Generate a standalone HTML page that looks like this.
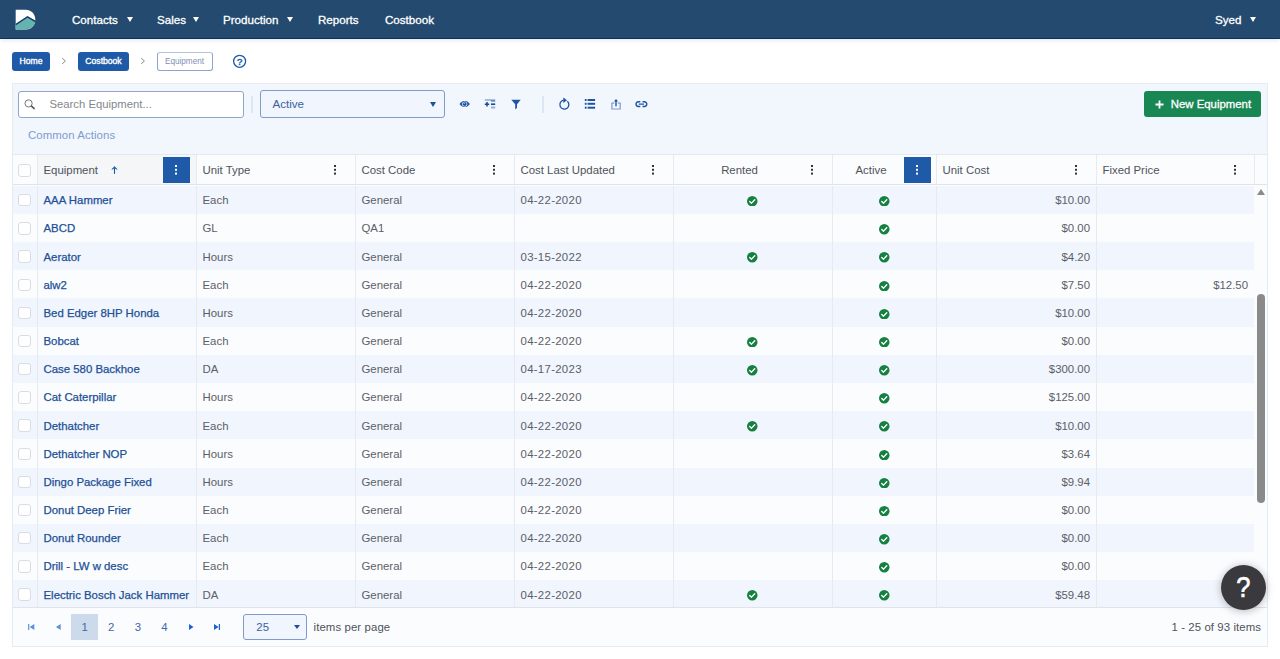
<!DOCTYPE html>
<html lang="en">
<head>
<meta charset="utf-8">
<title>Equipment</title>
<style>
*{box-sizing:border-box;margin:0;padding:0}
html,body{width:1280px;height:659px;overflow:hidden;background:#fff;font-family:"Liberation Sans",sans-serif;color:#4a4f57;font-size:11.4px}
.nav{position:absolute;left:0;top:0;width:1280px;height:39px;background:#244a6f;border-bottom:1.3px solid #0a3263;box-shadow:0 3px 3px -1px rgba(0,0,0,.08)}
.nav .item{position:absolute;top:0;height:39px;line-height:39px;color:#fff;font-size:11.6px;font-weight:400;-webkit-text-stroke:.3px #fff;white-space:nowrap}
.nav .caret{position:absolute;top:17px;width:0;height:0;border-left:3.6px solid transparent;border-right:3.6px solid transparent;border-top:5.6px solid #fff}
.logo{position:absolute;left:15px;top:9px;width:21px;height:21px}
.bc{position:absolute;top:52px;height:18.5px;border-radius:3px;font-size:8.6px;line-height:18.5px;text-align:center;white-space:nowrap}
.bc.fill{background:#1e5aa8;color:#fff;-webkit-text-stroke:.35px #fff}
.bc.out{border:1px solid #8da4cc;border-top-color:#b5c3de;color:#8797bd;line-height:17.6px;background:#fff;font-size:8.2px;color:#7f8fb5}
.chev{position:absolute;top:52px;font-size:11px;line-height:18px;color:#8a8a8a}
.panel{position:absolute;left:12px;top:83px;width:1256px;height:564px;background:#f2f6fd;border:1px solid #e6eaf2}
.search{position:absolute;left:18px;top:91px;width:226px;height:27px;background:#fff;border:1px solid #8fa6cf;border-radius:3px}
.search span{position:absolute;left:30.5px;top:0;line-height:25px;font-size:11.3px;color:#84878e;white-space:nowrap}
.vdiv{position:absolute;top:96px;width:1.5px;height:16.5px;background:#dde6f3}
.select{position:absolute;left:260px;top:90px;width:185px;height:28px;border:1px solid #7f9acb;border-radius:3px;background:#f1f5fd}
.select span{position:absolute;left:11.5px;top:0;line-height:26px;font-size:11.6px;color:#3a5f9e}
.select i{position:absolute;right:8px;top:11px;width:0;height:0;border-left:3px solid transparent;border-right:3px solid transparent;border-top:5px solid #1e4f9a}
.ico{position:absolute}
.btn{position:absolute;left:1143.7px;top:91px;width:117.3px;height:26.3px;background:#198754;border-radius:3px;color:#fff;font-size:11.4px;line-height:26px;white-space:nowrap;-webkit-text-stroke:.3px #fff}
.btn span{position:absolute;left:27px;top:0}
.ca{position:absolute;left:28px;top:128px;font-size:11.4px;line-height:14px;color:#7c9dcf;letter-spacing:.08px;white-space:nowrap}
.grid{position:absolute;left:13px;top:154px;width:1254px;height:492px;background:#fbfcfe}
.thead{position:absolute;left:0;top:0;width:1254px;height:31px;background:#fbfcfe;border-top:1px solid #e4e8ef;border-bottom:1px solid #e0e4ea}
.th{position:absolute;top:0;height:29px;line-height:30px;border-left:1px solid #e7eaf0;font-size:11.4px;color:#4e535b;white-space:nowrap}
.th span{position:absolute;left:5.5px}
.th.ctr span{left:0;right:55px;text-align:center}
.dots{position:absolute;top:10px;width:3px;height:12px}
.dots:before{content:"";position:absolute;left:.1px;top:.2px;width:2.3px;height:2.1px;background:#333;box-shadow:0 3.8px 0 #333,0 7.6px 0 #333}
.dots.w:before{background:#fff;box-shadow:0 3.8px 0 #fff,0 7.6px 0 #fff}
.mbtn{position:absolute;top:2px;width:27px;height:26px;background:#1e5aa8}
.body{position:absolute;left:0;top:31.8px;width:1241px;height:421.2px;overflow:hidden}
.tr{position:relative;height:28.18px;width:1241px}
.tr.odd{background:#f1f5fd}
.tr.even{background:#fbfcfe}
.td{position:absolute;top:0;height:28.18px;line-height:28.18px;padding-top:.4px;border-left:1px solid #e7eaf1;padding-left:5.5px;white-space:nowrap;font-size:11.4px;color:#5b6068}
.td a{color:#1d5096;-webkit-text-stroke:.25px #1d5096}
.td.num{text-align:right;padding-right:6px}
.td.ctr{padding:0}
.c0{left:0;width:24px;border-left:none}
.c1{left:24px;width:159px}.c2{left:183px;width:159px}.c3{left:342px;width:159px}.c4{left:501px;width:159px;letter-spacing:.3px}
.c5{left:660px;width:159px}.c6{left:819px;width:104px}.c7{left:923px;width:160px}.c8{left:1083px;width:158px}
.cb{position:absolute;left:5.4px;top:8.2px;width:12.6px;height:12.4px;border:1px solid #d9dce1;border-radius:3px;background:#fff}
.ck{position:absolute;top:10.2px;width:10.5px;height:10.5px}
.c5 .ck{left:73.4px}.c6 .ck{left:46.4px}
.pager{position:absolute;left:0;top:453px;width:1254px;height:39px;border-top:1px solid #e0e4ea;background:#fbfcfe}
.pg{position:absolute;top:5.7px;width:26.6px;height:26.3px;line-height:27px;text-align:center;font-size:11.4px;color:#3f68a8}
.pg.sel{background:#cddaeb;color:#3f68a8}
.psel{position:absolute;left:230.2px;top:6.2px;width:63.4px;height:25.6px;border:1px solid #7f9acb;border-radius:3px;background:#f1f5fd}
.psel span{position:absolute;left:12px;line-height:25px;letter-spacing:.2px;font-size:11.4px;color:#3a5f9e}
.psel i{position:absolute;right:5.5px;top:9.6px;width:0;height:0;border-left:3.3px solid transparent;border-right:3.3px solid transparent;border-top:4.6px solid #1e4f9a}
.ipp{position:absolute;left:300.5px;top:6px;line-height:26px;letter-spacing:.1px;font-size:11.4px;color:#4e535b;white-space:nowrap}
.info{position:absolute;right:6px;top:6px;line-height:26px;letter-spacing:.08px;font-size:11.4px;color:#4e535b;white-space:nowrap}
.sb{position:absolute;left:1241px;top:31px;width:13px;height:422px;background:#fbfcfe}
.sb .thumb{position:absolute;left:3.3px;top:108.6px;width:7.6px;height:209.6px;border-radius:4px;background:#8a8a8a}
.sb .up{position:absolute;left:3.2px;top:4px;width:0;height:0;border-left:4px solid transparent;border-right:4px solid transparent;border-bottom:6px solid #8a8a8a}
.fab span{display:inline-block;transform:scaleX(.85);position:relative;top:-.7px;left:-.3px}
.fab{position:absolute;left:1221px;top:565px;width:45px;height:45px;border-radius:50%;background:#3a393e;box-shadow:0 1px 8px rgba(0,0,0,.28);color:#fff;font-size:30px;font-weight:400;-webkit-text-stroke:.7px #fff;text-align:center;line-height:45px}
</style>
</head>
<body>
<div class="nav">
<svg class="logo" viewBox="0 0 21 21"><path d="M0.7 0.7 H10.6 C16.2 0.7 20.3 5 20.3 10.6 C20.3 16.2 16.6 20.5 11 20.5 H0.7 Z" fill="#fff"/><path d="M0.7 16.3 L12.5 8.6 L20.1 13.1 C19.3 17.5 15.8 20.5 11 20.5 H0.7 Z" fill="#65b3b0"/><path d="M0.7 15.6 L12.5 7.9 L20.3 12.5" fill="none" stroke="#123a66" stroke-width="1.5"/></svg>
<div class="item" style="left:72px">Contacts</div><i class="caret" style="left:126.5px"></i>
<div class="item" style="left:157px">Sales</div><i class="caret" style="left:193.1px"></i>
<div class="item" style="left:223px">Production</div><i class="caret" style="left:287.4px"></i>
<div class="item" style="left:318px">Reports</div>
<div class="item" style="left:385px">Costbook</div>
<div class="item" style="left:1215px">Syed</div><i class="caret" style="left:1250px"></i>
</div>
<div class="bc fill" style="left:12px;width:38px">Home</div>
<svg class="ico" style="left:61px;top:57px" width="6" height="8" viewBox="0 0 6 8"><path d="M1.2 1.1 L4.4 4 L1.2 6.9" fill="none" stroke="#8a8a8a" stroke-width="1"/></svg>
<div class="bc fill" style="left:78px;width:51px">Costbook</div>
<svg class="ico" style="left:140px;top:57px" width="6" height="8" viewBox="0 0 6 8"><path d="M1.2 1.1 L4.4 4 L1.2 6.9" fill="none" stroke="#8a8a8a" stroke-width="1"/></svg>
<div class="bc out" style="left:156.5px;width:56px">Equipment</div>
<svg class="ico" style="left:232px;top:54px" width="15" height="15" viewBox="0 0 15 15"><circle cx="7.6" cy="7.3" r="6" fill="#fff" stroke="#1e5aa8" stroke-width="1.3"/><text x="7.6" y="11.3" text-anchor="middle" font-family="Liberation Sans, sans-serif" font-weight="400" stroke="#1e5aa8" stroke-width=".4" font-size="9.7" fill="#1e5aa8">?</text></svg>

<div class="panel"></div>
<div class="search"><svg style="position:absolute;left:5px;top:7px" width="12" height="12" viewBox="0 0 12 12"><circle cx="4.6" cy="4.4" r="3.6" fill="none" stroke="#707070" stroke-width=".95"/><path d="M7.5 7.1 L10.2 9.6" stroke="#555" stroke-width="1.5" stroke-linecap="round"/></svg><span>Search Equipment...</span></div>
<div class="vdiv" style="left:251px"></div>
<div class="select"><span>Active</span><i></i></div>

<svg class="ico" style="left:459px;top:100px" width="12" height="8" viewBox="0 0 12 8"><path d="M0.5 4 C2.3 1.4 4 0.9 5.7 0.9 C7.4 0.9 9.1 1.4 10.9 4 C9.1 6.6 7.4 7.1 5.7 7.1 C4 7.1 2.3 6.6 0.5 4 Z" fill="#1d55a3"/><circle cx="5.7" cy="4" r="2.6" fill="#f2f6fd"/><circle cx="5.7" cy="4" r="2" fill="#1d55a3"/><rect x="4.6" y="2.7" width="1.3" height="1" fill="#c9d6ee"/></svg>
<svg class="ico" style="left:484px;top:99px" width="12" height="11" viewBox="0 0 12 11"><rect x="0.8" y="0.5" width="10.4" height="1" fill="#5d84c4"/><rect x="7" y="1.5" width="4.2" height="1" fill="#2d62ad"/><rect x="7" y="4.4" width="4.2" height="1.6" fill="#174a96"/><rect x="7" y="7.4" width="4.2" height="2.2" fill="#9db5dd"/><path d="M3 3.1V7.5M0.8 5.3H5.2" stroke="#174a96" stroke-width="1.5"/></svg>
<svg class="ico" style="left:511px;top:99px" width="11" height="11" viewBox="0 0 11 11"><path d="M0.3 0.8 H9.7 L6 5.2 V9 L4.2 10.2 V5.2 Z" fill="#1d55a3"/></svg>
<svg class="ico" style="left:558px;top:97px" width="13" height="14" viewBox="0 0 13 14"><path d="M9.3 4.2 A4.5 4.5 0 1 1 5.5 3.2" fill="none" stroke="#1d55a3" stroke-width="1.35"/><path d="M5.3 0.6 L9 3.3 L5.3 6 Z" fill="#1d55a3"/></svg>
<svg class="ico" style="left:584px;top:98px" width="12" height="12" viewBox="0 0 12 12"><g fill="#1d55a3"><rect x="0.8" y="1" width="1.8" height="2"/><rect x="3.6" y="1" width="7.5" height="2"/><rect x="0.8" y="4.8" width="1.8" height="2"/><rect x="3.6" y="4.8" width="7.5" height="2"/><rect x="0.8" y="8.7" width="1.8" height="2"/><rect x="3.6" y="8.7" width="7.5" height="2"/></g></svg>
<svg class="ico" style="left:610px;top:98px" width="12" height="13" viewBox="0 0 12 13"><path d="M4.2 5.1 H1.9 V11 H10.2 V5.1 H7.9" fill="none" stroke="#7d9ad2" stroke-width="1.2"/><path d="M6 8.2 V2.4" stroke="#1d55a3" stroke-width="1.4"/><path d="M3.9 3.6 L6 1 L8.1 3.6 Z" fill="#1d55a3"/></svg>
<svg class="ico" style="left:635px;top:100px" width="13" height="8" viewBox="0 0 13 8"><path d="M5.3 1.7 H3.4 A2.4 2.4 0 0 0 3.4 6.5 H5.3 M7.5 1.7 H9.4 A2.4 2.4 0 0 1 9.4 6.5 H7.5 M3.8 4.1 H9" fill="none" stroke="#1d55a3" stroke-width="1.4"/></svg>

<div class="vdiv" style="left:542.2px"></div>
<div class="btn"><svg style="position:absolute;left:11px;top:8.5px" width="9" height="9" viewBox="0 0 9 9"><path d="M4.5 0.5V8.5M0.5 4.5H8.5" stroke="#fff" stroke-width="1.8"/></svg><span>New Equipment</span></div>
<div class="ca">Common Actions</div>

<div class="grid">
<div class="thead">
<div class="th" style="left:0;width:24px;border-left:none"><span class="cb" style="left:5.4px;top:9.1px;height:12.7px"></span></div>
<div class="th" style="left:24px;width:159px;background:#f5f6f8"><span>Equipment</span><svg style="position:absolute;left:73px;top:9px" width="7" height="10" viewBox="0 0 7 10"><path d="M3.5 9.9V3.2" fill="none" stroke="#1e5aa8" stroke-width="1.1"/><path d="M0.9 5.2 L3.5 2.4 L6.1 5.2 L6.1 5.4 L3.5 4 L0.9 5.4Z" fill="#1e5aa8" stroke="#1e5aa8" stroke-width=".5"/></svg><div class="mbtn" style="left:125px"><i class="dots w" style="left:11.8px;top:7.8px"></i></div></div>
<div class="th" style="left:183px;width:159px"><span>Unit Type</span><i class="dots" style="left:137px"></i></div>
<div class="th" style="left:342px;width:159px"><span>Cost Code</span><i class="dots" style="left:137px"></i></div>
<div class="th" style="left:501px;width:159px"><span>Cost Last Updated</span><i class="dots" style="left:137px"></i></div>
<div class="th ctr" style="left:660px;width:159px"><span style="right:27px">Rented</span><i class="dots" style="left:137px"></i></div>
<div class="th ctr" style="left:819px;width:104px"><span style="right:27px">Active</span><div class="mbtn" style="left:71px"><i class="dots w" style="left:11.8px;top:7.8px"></i></div></div>
<div class="th" style="left:923px;width:160px"><span>Unit Cost</span><i class="dots" style="left:138px"></i></div>
<div class="th" style="left:1083px;width:159px"><span>Fixed Price</span><i class="dots" style="left:137px"></i></div>
<div class="th" style="left:1241px;width:13px"></div>
</div>
<div class="body">
<div class="tr odd"><div class="td c0"><span class="cb"></span></div><div class="td c1"><a>AAA Hammer</a></div><div class="td c2">Each</div><div class="td c3">General</div><div class="td c4">04-22-2020</div><div class="td c5 ctr"><svg class="ck" viewBox="0 0 16 16"><circle cx="8" cy="8" r="8" fill="#15803f"/><path d="M4.2 8.3 L6.9 10.9 L11.8 5.6" fill="none" stroke="#fff" stroke-width="2.1" stroke-linecap="round" stroke-linejoin="round"/></svg></div><div class="td c6 ctr"><svg class="ck" viewBox="0 0 16 16"><circle cx="8" cy="8" r="8" fill="#15803f"/><path d="M4.2 8.3 L6.9 10.9 L11.8 5.6" fill="none" stroke="#fff" stroke-width="2.1" stroke-linecap="round" stroke-linejoin="round"/></svg></div><div class="td c7 num">$10.00</div><div class="td c8 num"></div></div>
<div class="tr even"><div class="td c0"><span class="cb"></span></div><div class="td c1"><a>ABCD</a></div><div class="td c2">GL</div><div class="td c3">QA1</div><div class="td c4"></div><div class="td c5 ctr"></div><div class="td c6 ctr"><svg class="ck" viewBox="0 0 16 16"><circle cx="8" cy="8" r="8" fill="#15803f"/><path d="M4.2 8.3 L6.9 10.9 L11.8 5.6" fill="none" stroke="#fff" stroke-width="2.1" stroke-linecap="round" stroke-linejoin="round"/></svg></div><div class="td c7 num">$0.00</div><div class="td c8 num"></div></div>
<div class="tr odd"><div class="td c0"><span class="cb"></span></div><div class="td c1"><a>Aerator</a></div><div class="td c2">Hours</div><div class="td c3">General</div><div class="td c4">03-15-2022</div><div class="td c5 ctr"><svg class="ck" viewBox="0 0 16 16"><circle cx="8" cy="8" r="8" fill="#15803f"/><path d="M4.2 8.3 L6.9 10.9 L11.8 5.6" fill="none" stroke="#fff" stroke-width="2.1" stroke-linecap="round" stroke-linejoin="round"/></svg></div><div class="td c6 ctr"><svg class="ck" viewBox="0 0 16 16"><circle cx="8" cy="8" r="8" fill="#15803f"/><path d="M4.2 8.3 L6.9 10.9 L11.8 5.6" fill="none" stroke="#fff" stroke-width="2.1" stroke-linecap="round" stroke-linejoin="round"/></svg></div><div class="td c7 num">$4.20</div><div class="td c8 num"></div></div>
<div class="tr even"><div class="td c0"><span class="cb"></span></div><div class="td c1"><a>alw2</a></div><div class="td c2">Each</div><div class="td c3">General</div><div class="td c4">04-22-2020</div><div class="td c5 ctr"></div><div class="td c6 ctr"><svg class="ck" viewBox="0 0 16 16"><circle cx="8" cy="8" r="8" fill="#15803f"/><path d="M4.2 8.3 L6.9 10.9 L11.8 5.6" fill="none" stroke="#fff" stroke-width="2.1" stroke-linecap="round" stroke-linejoin="round"/></svg></div><div class="td c7 num">$7.50</div><div class="td c8 num">$12.50</div></div>
<div class="tr odd"><div class="td c0"><span class="cb"></span></div><div class="td c1"><a>Bed Edger 8HP Honda</a></div><div class="td c2">Hours</div><div class="td c3">General</div><div class="td c4">04-22-2020</div><div class="td c5 ctr"></div><div class="td c6 ctr"><svg class="ck" viewBox="0 0 16 16"><circle cx="8" cy="8" r="8" fill="#15803f"/><path d="M4.2 8.3 L6.9 10.9 L11.8 5.6" fill="none" stroke="#fff" stroke-width="2.1" stroke-linecap="round" stroke-linejoin="round"/></svg></div><div class="td c7 num">$10.00</div><div class="td c8 num"></div></div>
<div class="tr even"><div class="td c0"><span class="cb"></span></div><div class="td c1"><a>Bobcat</a></div><div class="td c2">Each</div><div class="td c3">General</div><div class="td c4">04-22-2020</div><div class="td c5 ctr"><svg class="ck" viewBox="0 0 16 16"><circle cx="8" cy="8" r="8" fill="#15803f"/><path d="M4.2 8.3 L6.9 10.9 L11.8 5.6" fill="none" stroke="#fff" stroke-width="2.1" stroke-linecap="round" stroke-linejoin="round"/></svg></div><div class="td c6 ctr"><svg class="ck" viewBox="0 0 16 16"><circle cx="8" cy="8" r="8" fill="#15803f"/><path d="M4.2 8.3 L6.9 10.9 L11.8 5.6" fill="none" stroke="#fff" stroke-width="2.1" stroke-linecap="round" stroke-linejoin="round"/></svg></div><div class="td c7 num">$0.00</div><div class="td c8 num"></div></div>
<div class="tr odd"><div class="td c0"><span class="cb"></span></div><div class="td c1"><a>Case 580 Backhoe</a></div><div class="td c2">DA</div><div class="td c3">General</div><div class="td c4">04-17-2023</div><div class="td c5 ctr"><svg class="ck" viewBox="0 0 16 16"><circle cx="8" cy="8" r="8" fill="#15803f"/><path d="M4.2 8.3 L6.9 10.9 L11.8 5.6" fill="none" stroke="#fff" stroke-width="2.1" stroke-linecap="round" stroke-linejoin="round"/></svg></div><div class="td c6 ctr"><svg class="ck" viewBox="0 0 16 16"><circle cx="8" cy="8" r="8" fill="#15803f"/><path d="M4.2 8.3 L6.9 10.9 L11.8 5.6" fill="none" stroke="#fff" stroke-width="2.1" stroke-linecap="round" stroke-linejoin="round"/></svg></div><div class="td c7 num">$300.00</div><div class="td c8 num"></div></div>
<div class="tr even"><div class="td c0"><span class="cb"></span></div><div class="td c1"><a>Cat Caterpillar</a></div><div class="td c2">Hours</div><div class="td c3">General</div><div class="td c4">04-22-2020</div><div class="td c5 ctr"></div><div class="td c6 ctr"><svg class="ck" viewBox="0 0 16 16"><circle cx="8" cy="8" r="8" fill="#15803f"/><path d="M4.2 8.3 L6.9 10.9 L11.8 5.6" fill="none" stroke="#fff" stroke-width="2.1" stroke-linecap="round" stroke-linejoin="round"/></svg></div><div class="td c7 num">$125.00</div><div class="td c8 num"></div></div>
<div class="tr odd"><div class="td c0"><span class="cb"></span></div><div class="td c1"><a>Dethatcher</a></div><div class="td c2">Each</div><div class="td c3">General</div><div class="td c4">04-22-2020</div><div class="td c5 ctr"><svg class="ck" viewBox="0 0 16 16"><circle cx="8" cy="8" r="8" fill="#15803f"/><path d="M4.2 8.3 L6.9 10.9 L11.8 5.6" fill="none" stroke="#fff" stroke-width="2.1" stroke-linecap="round" stroke-linejoin="round"/></svg></div><div class="td c6 ctr"><svg class="ck" viewBox="0 0 16 16"><circle cx="8" cy="8" r="8" fill="#15803f"/><path d="M4.2 8.3 L6.9 10.9 L11.8 5.6" fill="none" stroke="#fff" stroke-width="2.1" stroke-linecap="round" stroke-linejoin="round"/></svg></div><div class="td c7 num">$10.00</div><div class="td c8 num"></div></div>
<div class="tr even"><div class="td c0"><span class="cb"></span></div><div class="td c1"><a>Dethatcher NOP</a></div><div class="td c2">Hours</div><div class="td c3">General</div><div class="td c4">04-22-2020</div><div class="td c5 ctr"></div><div class="td c6 ctr"><svg class="ck" viewBox="0 0 16 16"><circle cx="8" cy="8" r="8" fill="#15803f"/><path d="M4.2 8.3 L6.9 10.9 L11.8 5.6" fill="none" stroke="#fff" stroke-width="2.1" stroke-linecap="round" stroke-linejoin="round"/></svg></div><div class="td c7 num">$3.64</div><div class="td c8 num"></div></div>
<div class="tr odd"><div class="td c0"><span class="cb"></span></div><div class="td c1"><a>Dingo Package Fixed</a></div><div class="td c2">Hours</div><div class="td c3">General</div><div class="td c4">04-22-2020</div><div class="td c5 ctr"></div><div class="td c6 ctr"><svg class="ck" viewBox="0 0 16 16"><circle cx="8" cy="8" r="8" fill="#15803f"/><path d="M4.2 8.3 L6.9 10.9 L11.8 5.6" fill="none" stroke="#fff" stroke-width="2.1" stroke-linecap="round" stroke-linejoin="round"/></svg></div><div class="td c7 num">$9.94</div><div class="td c8 num"></div></div>
<div class="tr even"><div class="td c0"><span class="cb"></span></div><div class="td c1"><a>Donut Deep Frier</a></div><div class="td c2">Each</div><div class="td c3">General</div><div class="td c4">04-22-2020</div><div class="td c5 ctr"></div><div class="td c6 ctr"><svg class="ck" viewBox="0 0 16 16"><circle cx="8" cy="8" r="8" fill="#15803f"/><path d="M4.2 8.3 L6.9 10.9 L11.8 5.6" fill="none" stroke="#fff" stroke-width="2.1" stroke-linecap="round" stroke-linejoin="round"/></svg></div><div class="td c7 num">$0.00</div><div class="td c8 num"></div></div>
<div class="tr odd"><div class="td c0"><span class="cb"></span></div><div class="td c1"><a>Donut Rounder</a></div><div class="td c2">Each</div><div class="td c3">General</div><div class="td c4">04-22-2020</div><div class="td c5 ctr"></div><div class="td c6 ctr"><svg class="ck" viewBox="0 0 16 16"><circle cx="8" cy="8" r="8" fill="#15803f"/><path d="M4.2 8.3 L6.9 10.9 L11.8 5.6" fill="none" stroke="#fff" stroke-width="2.1" stroke-linecap="round" stroke-linejoin="round"/></svg></div><div class="td c7 num">$0.00</div><div class="td c8 num"></div></div>
<div class="tr even"><div class="td c0"><span class="cb"></span></div><div class="td c1"><a>Drill - LW w desc</a></div><div class="td c2">Each</div><div class="td c3">General</div><div class="td c4">04-22-2020</div><div class="td c5 ctr"></div><div class="td c6 ctr"><svg class="ck" viewBox="0 0 16 16"><circle cx="8" cy="8" r="8" fill="#15803f"/><path d="M4.2 8.3 L6.9 10.9 L11.8 5.6" fill="none" stroke="#fff" stroke-width="2.1" stroke-linecap="round" stroke-linejoin="round"/></svg></div><div class="td c7 num">$0.00</div><div class="td c8 num"></div></div>
<div class="tr odd"><div class="td c0"><span class="cb"></span></div><div class="td c1"><a>Electric Bosch Jack Hammer</a></div><div class="td c2">DA</div><div class="td c3">General</div><div class="td c4">04-22-2020</div><div class="td c5 ctr"><svg class="ck" viewBox="0 0 16 16"><circle cx="8" cy="8" r="8" fill="#15803f"/><path d="M4.2 8.3 L6.9 10.9 L11.8 5.6" fill="none" stroke="#fff" stroke-width="2.1" stroke-linecap="round" stroke-linejoin="round"/></svg></div><div class="td c6 ctr"><svg class="ck" viewBox="0 0 16 16"><circle cx="8" cy="8" r="8" fill="#15803f"/><path d="M4.2 8.3 L6.9 10.9 L11.8 5.6" fill="none" stroke="#fff" stroke-width="2.1" stroke-linecap="round" stroke-linejoin="round"/></svg></div><div class="td c7 num">$59.48</div><div class="td c8 num"></div></div>
</div>
<div class="sb"><i class="up"></i><i class="thumb"></i></div>
<div class="pager">
<svg class="ico" style="left:15px;top:14.8px" width="8" height="8" viewBox="0 0 8 8"><path d="M0.7 1V7" stroke="#5f90d8" stroke-width="1.2"/><path d="M6.3 1 V7 L1.6 4 Z" fill="#5f90d8"/></svg>
<svg class="ico" style="left:42px;top:14.8px" width="8" height="8" viewBox="0 0 8 8"><path d="M5.7 1 V7 L0.9 4 Z" fill="#5f90d8"/></svg>
<svg class="ico" style="left:175px;top:14.8px" width="8" height="8" viewBox="0 0 8 8"><path d="M1 1 V7 L5.5 4 Z" fill="#1a62d2"/></svg>
<svg class="ico" style="left:200px;top:14.8px" width="8" height="8" viewBox="0 0 8 8"><path d="M6.4 1V7" stroke="#1a62d2" stroke-width="1.2"/><path d="M1 1 V7 L5.6 4 Z" fill="#1a62d2"/></svg>
<div class="pg sel" style="left:58.3px">1</div>
<div class="pg" style="left:84.9px">2</div>
<div class="pg" style="left:111.5px">3</div>
<div class="pg" style="left:138.2px">4</div>
<div class="psel"><span>25</span><i></i></div>
<div class="ipp">items per page</div>
<div class="info">1 - 25 of 93 items</div>
</div>
</div>
<div class="fab"><span>?</span></div>
</body>
</html>
